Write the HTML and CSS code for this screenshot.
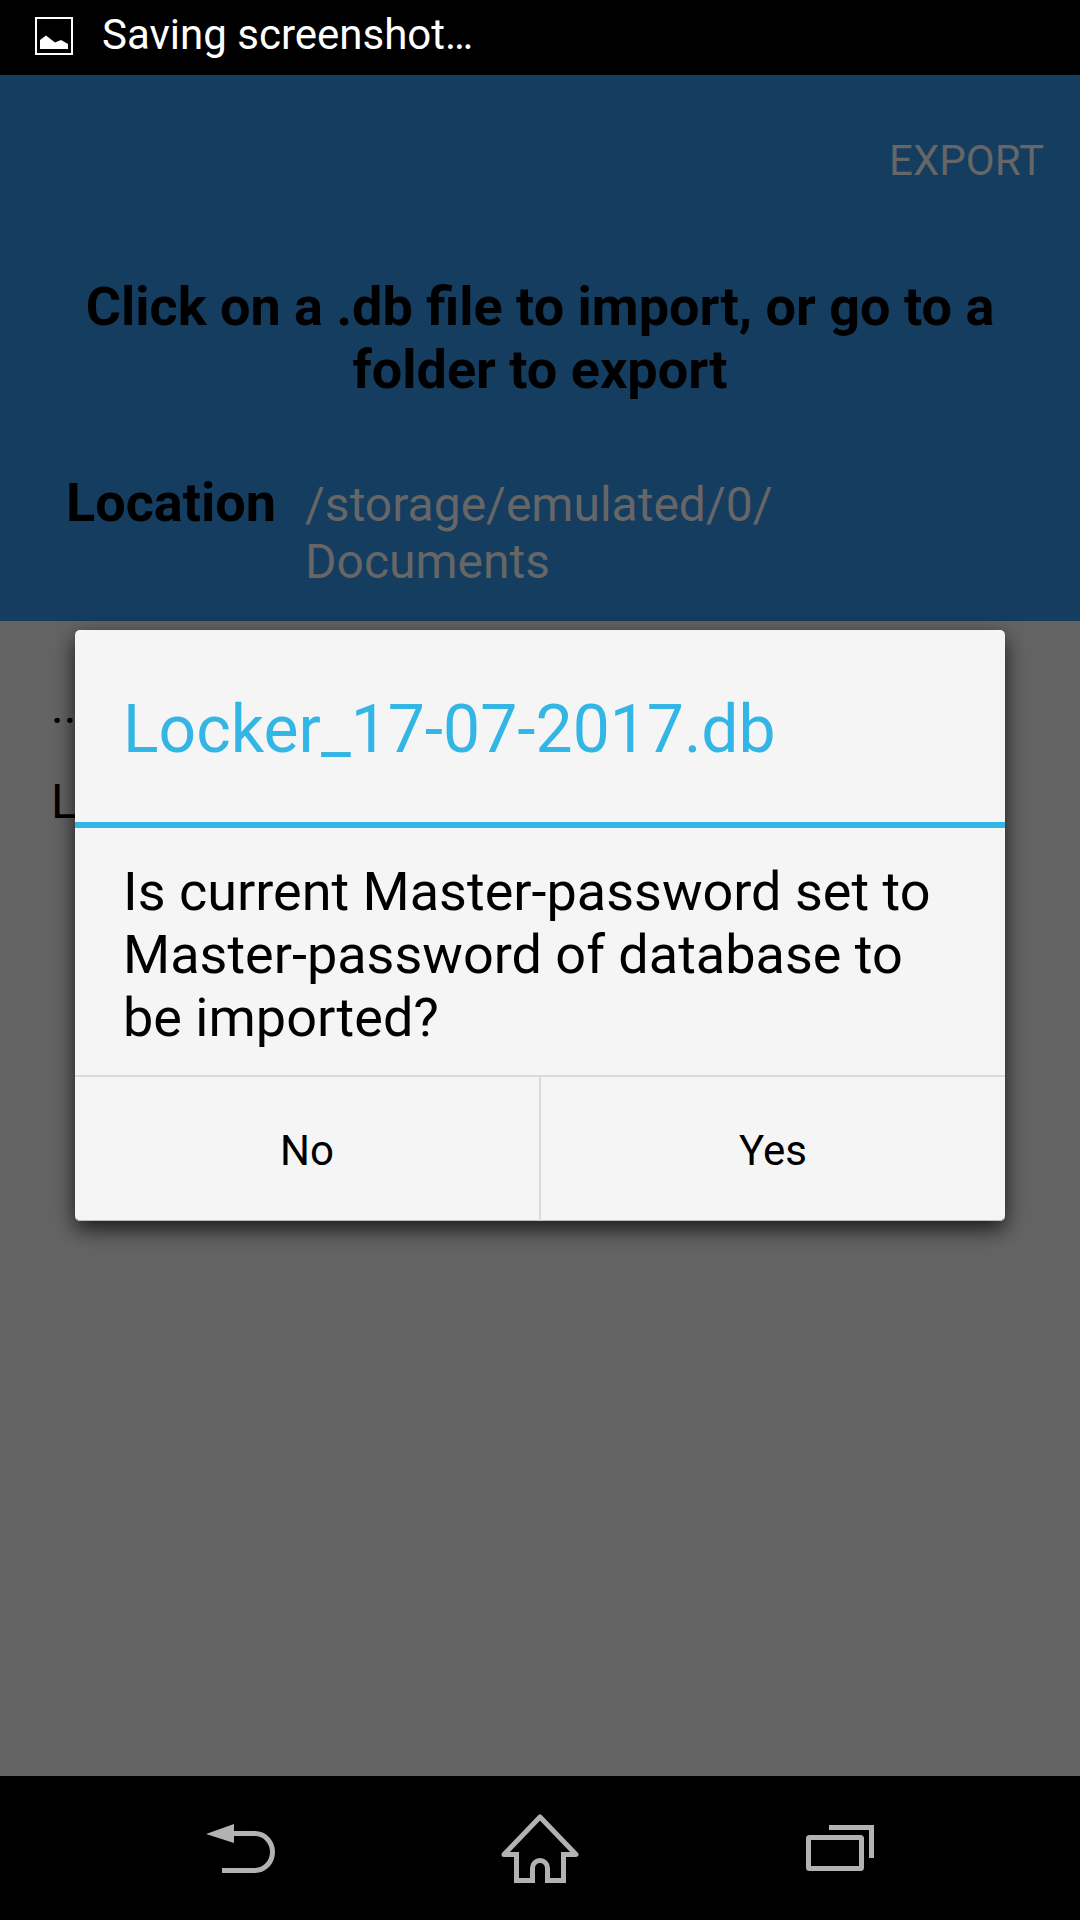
FILE: index.html
```html
<!DOCTYPE html>
<html lang="en">
<head>
<meta charset="utf-8">
<meta name="viewport" content="width=device-width, initial-scale=1">
<title>Import database</title>
<link rel="stylesheet" href="styles.css">
</head>
<body>
<div class="screen">
  <div class="status-bar" role="status">
    <svg class="status-icon" viewBox="0 0 38 38" aria-hidden="true">
      <rect x="1" y="1" width="36" height="36" fill="none" stroke="#fff" stroke-width="2"/>
      <path d="M5 32V23L11 18.500L20 25.500L26 23L33 27V32Z" fill="#fff"/>
    </svg>
    <span class="status-text">Saving screenshot…</span>
  </div>

  <main class="app">
    <header class="header">
      <button class="export" type="button">EXPORT</button>
      <h1 class="heading">Click on a .db file to import, or go to a folder to export</h1>
      <div class="location">
        <span class="location-label">Location</span>
        <span class="location-path">/storage/emulated/0/<br>Documents</span>
      </div>
    </header>
    <ul class="files">
      <li>..</li>
      <li>Locker_17-07-2017.db</li>
    </ul>

    <div class="overlay">
      <section class="dialog" role="alertdialog" aria-labelledby="dialog-title" aria-describedby="dialog-message">
        <h2 class="dialog-title" id="dialog-title">Locker_17-07-2017.db</h2>
        <p class="dialog-message" id="dialog-message">Is current Master-password set to Master-password of database to be imported?</p>
        <div class="dialog-actions">
          <button type="button">No</button>
          <button type="button">Yes</button>
        </div>
      </section>
    </div>
  </main>

  <nav class="nav-bar" aria-label="System">
    <button type="button" aria-label="Back">
      <svg viewBox="0 0 90 90" aria-hidden="true">
        <path d="M38 30.500H60A17.500 18.500 0 0 1 60 67.500H27" fill="none" stroke="#b2b2b2" stroke-width="5"/>
        <path d="M11 31L39 21V40Z" fill="#b2b2b2"/>
      </svg>
    </button>
    <button type="button" aria-label="Home">
      <svg viewBox="0 0 90 90" fill="none" stroke="#b2b2b2" stroke-width="5" aria-hidden="true">
        <path d="M24 51.500H9L45 14L81 51.500H66" stroke-linejoin="round"/>
        <path d="M21.500 49V77.500H37.500V65A7.500 7.500 0 0 1 52.500 65V77.500H68.500V49"/>
      </svg>
    </button>
    <button type="button" aria-label="Recent apps">
      <svg viewBox="0 0 90 90" fill="none" stroke="#b2b2b2" stroke-width="5" aria-hidden="true">
        <rect x="13.500" y="34.500" width="53" height="31" rx="1"/>
        <path d="M34 24.500H76.500V55"/>
      </svg>
    </button>
  </nav>
</div>
</body>
</html>
```
FILE: styles.css
```css
* {
  box-sizing: border-box;
}

body,
h1,
h2,
p,
ul {
  margin: 0;
  padding: 0;
}

body {
  background: #000;
  color: #000;
  font-family: Roboto, "Liberation Sans", sans-serif;
  font-size: 48px;
  line-height: 57px;
}

button {
  padding: 0;
  border: 0;
  background: none;
  color: inherit;
  font: inherit;
}

.screen {
  display: flex;
  flex-direction: column;
  min-height: 100vh;
}

.status-bar {
  display: flex;
  align-items: center;
  gap: 29px;
  min-height: 75px;
  padding: 0 35px 3px;
  color: #fff;
  font-size: 42px;
  line-height: 50px;
}

.status-icon {
  width: 38px;
  height: 38px;
}

.status-text {
  padding-bottom: 3px;
}

.app {
  position: relative;
  flex: 1;
  background: #646464;
}

.header {
  display: flex;
  flex-direction: column;
  padding: 61px 66px 31px;
  background: #143d60;
}

.export {
  align-self: flex-end;
  margin-right: -30px;
  color: #666;
  font-size: 42px;
  line-height: 50px;
}

.heading {
  margin-top: 89px;
  font-size: 54px;
  font-weight: 700;
  line-height: 63px;
  text-align: center;
}

.location {
  display: flex;
  align-items: baseline;
  gap: 29px;
  margin-top: 70px;
}

.location-label {
  font-size: 54px;
  font-weight: 700;
  line-height: 63px;
}

.location-path {
  color: #666;
}

.files {
  padding: 38px 51px;
  list-style: none;
}

.files li {
  padding: 19px 0;
}

.overlay {
  position: absolute;
  inset: 0;
  display: flex;
  align-items: center;
  justify-content: center;
  padding: 0 75px;
}

.dialog {
  width: 100%;
  border-radius: 5px;
  background: #f5f5f5;
  box-shadow: 0 8px 22px rgba(0, 0, 0, 0.75), inset 0 -1px #bbb;
}

.dialog-title {
  padding: 61px 48px 53px;
  border-bottom: 6px solid #33b5e5;
  color: #33b5e5;
  font-size: 66px;
  font-weight: 400;
  line-height: 78px;
}

.dialog-message {
  padding: 32px 48px 26px;
  font-size: 54px;
  line-height: 63px;
}

.dialog-actions {
  display: flex;
  border-top: 2px solid #dadada;
}

.dialog-actions button {
  flex: 1;
  padding: 49px 0 45px;
  font-size: 42px;
  line-height: 50px;
}

.dialog-actions button + button {
  border-left: 2px solid #dadada;
}

.nav-bar {
  display: flex;
  justify-content: space-around;
  padding: 27px 90px;
}

.nav-bar svg {
  display: block;
  width: 90px;
  height: 90px;
}
```
